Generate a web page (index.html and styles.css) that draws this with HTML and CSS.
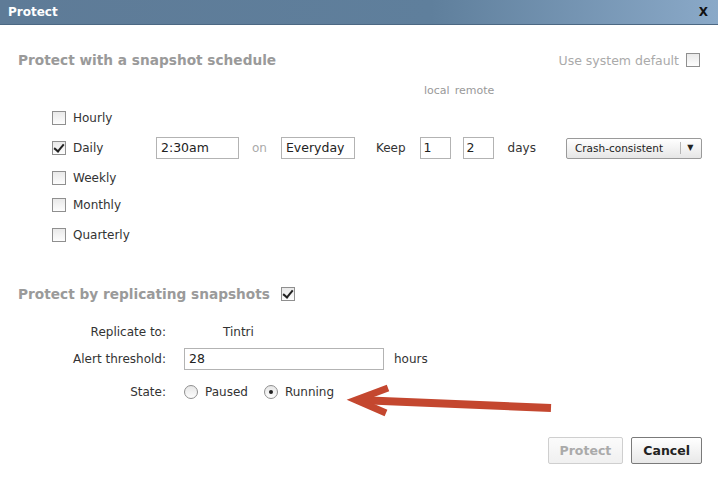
FILE: index.html
```html
<!DOCTYPE html>
<html lang="en">
<head>
  <meta charset="UTF-8" />
  <title>Protect</title>
  <link rel="stylesheet" href="styles.css">
</head>
<body>
  <div class="dialog">
    <div class="titlebar">
      <span class="title">Protect</span>
      <span class="close">X</span>
    </div>

    <div class="content">
      <div class="section-head">
        <h2>Protect with a snapshot schedule</h2>
        <label class="default-opt">Use system default <span class="box"></span></label>
      </div>

      <div class="col-labels"><span>local</span><span>remote</span></div>

      <div class="sched-row"><span class="box"></span><span class="freq">Hourly</span></div>
      <div class="sched-row">
        <span class="box checked"></span><span class="freq">Daily</span>
        <span class="field time">2:30am</span>
        <span class="muted on-word">on</span>
        <span class="field days-field">Everyday</span>
        <span class="keep">Keep</span>
        <span class="field num">1</span>
        <span class="field num num2">2</span>
        <span class="unit">days</span>
        <span class="select">Crash-consistent<span class="select-arrow">&#9660;</span></span>
      </div>
      <div class="sched-row"><span class="box"></span><span class="freq">Weekly</span></div>
      <div class="sched-row short"><span class="box"></span><span class="freq">Monthly</span></div>
      <div class="sched-row tall"><span class="box"></span><span class="freq">Quarterly</span></div>

      <div class="section-head second">
        <h2>Protect by replicating snapshots</h2>
        <span class="box checked"></span>
      </div>

      <div class="form-row">
        <span class="form-label">Replicate to:</span>
        <span class="target">Tintri</span>
      </div>
      <div class="form-row">
        <span class="form-label">Alert threshold:</span>
        <span class="field wide">28</span>
        <span class="unit">hours</span>
      </div>
      <div class="form-row state">
        <span class="form-label">State:</span>
        <span class="radio"></span><span class="radio-label">Paused</span>
        <span class="radio selected"></span><span class="radio-label">Running</span>
      </div>

      <div class="actions">
        <button class="btn" disabled>Protect</button>
        <button class="btn">Cancel</button>
      </div>
    </div>

    <svg class="arrow" width="230" height="50" viewBox="340 378 230 50">
      <path d="M551 408 L358 400" stroke="#c4472f" stroke-width="8" fill="none" />
      <path d="M388 388 L356 400 L386 413" stroke="#c4472f" stroke-width="7" fill="none" stroke-linejoin="miter" />
    </svg>
  </div>
</body>
</html>
```

FILE: styles.css
```css
body {
  margin: 0;
  font-family: 'DejaVu Sans', Verdana, sans-serif;
  font-size: 12px;
  color: #333;
  background: #fff;
}

.dialog {
  position: relative;
  width: 718px;
  height: 482px;
  background: #fff;
  overflow: hidden;
}

.titlebar {
  height: 24px;
  display: flex;
  align-items: center;
  justify-content: space-between;
  padding: 0 10px 0 8px;
  background: linear-gradient(to right, #5e7b97 0%, #5f7f9c 60%, #8aa9c8 100%);
  border-bottom: 1px solid #4c6883;
  color: #fff;
  font-weight: bold;
}

.title {
  font-size: 12px;
}

.close {
  font-size: 12px;
  color: #111;
}

.content {
  padding: 25px 16px 0 18px;
}

.section-head {
  display: flex;
  align-items: center;
  justify-content: space-between;
  height: 20px;
}

.section-head.second {
  justify-content: flex-start;
  margin-top: 31px;
}

.section-head.second .box {
  margin-left: 11px;
}

h2 {
  margin: 0;
  font-size: 13.7px;
  color: #9a9a9a;
  font-weight: bold;
}

.default-opt {
  display: flex;
  align-items: center;
  font-size: 12.5px;
  color: #aaa;
  margin-right: 2px;
}

.default-opt .box {
  margin-left: 7px;
}

.box {
  display: inline-block;
  width: 12px;
  height: 12px;
  border: 1px solid #8f8f8f;
  background: linear-gradient(#e9e9e9, #fdfdfd);
  position: relative;
  flex: none;
}

.box.checked::after {
  content: '';
  position: absolute;
  left: 3px;
  top: 0;
  width: 4px;
  height: 8px;
  border: solid #222;
  border-width: 0 2px 2px 0;
  transform: rotate(40deg);
}

.col-labels {
  margin: 14px 0 0 406px;
  height: 14px;
  font-size: 11px;
  color: #999;
  display: flex;
  gap: 5px;
}

.sched-row {
  display: flex;
  align-items: center;
  height: 30px;
  padding-left: 34px;
}

.col-labels + .sched-row {
  margin-top: 5px;
}

.sched-row.short {
  height: 24px;
}

.sched-row.tall {
  height: 36px;
}

.freq {
  width: 83px;
  margin-left: 7px;
}

.field {
  display: inline-block;
  box-sizing: border-box;
  height: 22px;
  line-height: 20px;
  padding: 0 4px;
  border: 1px solid #b3b3b3;
  background: #fff;
  color: #222;
  font-size: 12.5px;
}

.time {
  width: 83px;
}

.muted {
  color: #aaa;
}

.on-word {
  margin: 0 14px 0 13px;
}

.days-field {
  width: 74px;
}

.keep {
  margin: 0 14px 0 21px;
}

.num {
  width: 31px;
  padding: 0 3px;
}

.num2 {
  margin-left: 12px;
}

.unit {
  margin-left: 14px;
}

.select {
  display: inline-flex;
  align-items: center;
  box-sizing: border-box;
  width: 136px;
  height: 21px;
  margin-left: 30px;
  padding-left: 8px;
  border: 1px solid #9a9a9a;
  border-radius: 2px;
  background: linear-gradient(#ffffff, #e6e6e6);
  font-size: 10.5px;
  color: #222;
}

.select-arrow {
  margin-left: auto;
  width: 19px;
  text-align: center;
  border-left: 1px solid #b5b5b5;
  font-size: 8px;
  line-height: 12px;
  margin-right: 1px;
}

.form-row {
  display: flex;
  align-items: center;
  height: 24px;
  margin-top: 3px;
}

.section-head + .form-row {
  margin-top: 16px;
}

.form-row.state {
  margin-top: 9px;
}

.form-label {
  width: 148px;
  text-align: right;
  margin-right: 18px;
}

.target {
  margin-left: 39px;
}

.wide {
  width: 200px;
}

.form-row .unit {
  margin-left: 10px;
}

.radio {
  width: 12px;
  height: 12px;
  border: 1px solid #8f8f8f;
  border-radius: 50%;
  background: linear-gradient(#e6e6e6, #fdfdfd);
  position: relative;
  flex: none;
}

.radio.selected::after {
  content: '';
  position: absolute;
  left: 4px;
  top: 4px;
  width: 4px;
  height: 4px;
  border-radius: 50%;
  background: #222;
}

.radio-label {
  margin: 0 16px 0 7px;
}

.actions {
  display: flex;
  justify-content: flex-end;
  gap: 8px;
  margin-top: 33px;
}

.btn {
  height: 27px;
  padding: 0 11px;
  font-family: 'DejaVu Sans', Verdana, sans-serif;
  font-size: 12.5px;
  font-weight: bold;
  color: #222;
  border: 1px solid #7a7a7a;
  border-radius: 2px;
  background: linear-gradient(#ffffff, #e8e8e8);
}

.btn:disabled {
  color: #aaa;
  border-color: #cfcfcf;
  background: linear-gradient(#fbfbfb, #f0f0f0);
}

.arrow {
  position: absolute;
  left: 340px;
  top: 378px;
}
```
